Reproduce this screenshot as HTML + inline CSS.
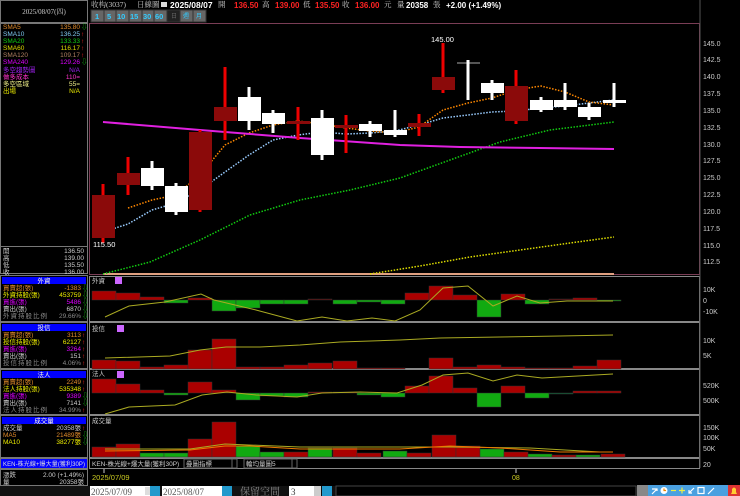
<!DOCTYPE html><html><head><meta charset="utf-8"><style>
html,body{margin:0;padding:0;background:#000;width:740px;height:496px;overflow:hidden}
svg{display:block}
text{font-family:"Liberation Sans","Noto Sans CJK TC",sans-serif}
.s{font-family:"Liberation Serif","Noto Serif CJK SC",serif}
</style></head><body>
<svg width="740" height="496" viewBox="0 0 740 496" xmlns="http://www.w3.org/2000/svg">
<rect width="740" height="496" fill="#000"/>
<g fill="none" stroke="#777" stroke-width="1">
<rect x="0.5" y="0.5" width="87" height="22"/>
<rect x="0.5" y="23.5" width="87" height="250"/>
<rect x="0.5" y="275.5" width="87" height="46"/>
<rect x="0.5" y="322.5" width="87" height="46"/>
<rect x="0.5" y="369.5" width="87" height="45"/>
<rect x="0.5" y="415.5" width="87" height="42"/>
<rect x="0.5" y="458.5" width="87" height="10"/>
<rect x="0.5" y="469.5" width="87" height="16"/>
</g>
<text x="44" y="14" font-size="7" fill="#ccc" text-anchor="middle" class="s">2025/08/07(四)</text>
<g font-size="6.5" class="s">
<text x="3" y="29" fill="#e08a2a">SMA5</text><text x="80" y="29" fill="#e08a2a" text-anchor="end">135.80</text><text x="81" y="29" fill="#1c1">⇩</text>
<text x="3" y="36" fill="#7fc8f0">SMA10</text><text x="80" y="36" fill="#7fc8f0" text-anchor="end">136.25</text><text x="81" y="36" fill="#f22">↑</text>
<text x="3" y="43" fill="#1c1">SMA20</text><text x="80" y="43" fill="#1c1" text-anchor="end">133.33</text><text x="81" y="43" fill="#f22">↑</text>
<text x="3" y="50" fill="#dd0">SMA60</text><text x="80" y="50" fill="#dd0" text-anchor="end">116.17</text><text x="81" y="50" fill="#f22">↑</text>
<text x="3" y="57" fill="#b08060">SMA120</text><text x="80" y="57" fill="#b08060" text-anchor="end">109.17</text><text x="81" y="57" fill="#f22">↑</text>
<text x="3" y="64" fill="#d0f">SMA240</text><text x="80" y="64" fill="#d0f" text-anchor="end">129.26</text><text x="81" y="64" fill="#1c1">⇩</text>
<text x="3" y="72" fill="#a020f0">多空趨勢圖</text><text x="80" y="72" fill="#a020f0" text-anchor="end">N/A</text>
<text x="3" y="79" fill="#f3c">做多成本</text><text x="80" y="79" fill="#f3c" text-anchor="end">110=</text>
<text x="3" y="86" fill="#ee8">多空區域</text><text x="80" y="86" fill="#ee8" text-anchor="end">55=</text>
<text x="3" y="93" fill="#ee0">出場</text><text x="80" y="93" fill="#ee0" text-anchor="end">N/A</text>
</g>
<line x1="0" y1="246.5" x2="88" y2="246.5" stroke="#777"/>
<g font-size="6.5" fill="#ccc" class="s">
<text x="3" y="253">開</text><text x="84" y="253" text-anchor="end">136.50</text>
<text x="3" y="260">高</text><text x="84" y="260" text-anchor="end">139.00</text>
<text x="3" y="267">低</text><text x="84" y="267" text-anchor="end">135.50</text>
<text x="3" y="274">收</text><text x="84" y="274" text-anchor="end">136.00</text>
</g>
<g font-size="6.5" class="s">
<rect x="2" y="277" width="84" height="7" fill="#0000ff"/><text x="44" y="283" fill="#ffd" text-anchor="middle">外資</text>
<text x="3" y="290" fill="#e08a2a">買賣超(張)</text><text x="81" y="290" fill="#e08a2a" text-anchor="end">-1383</text><text x="82" y="290" fill="#1c1">⇩</text>
<text x="3" y="297" fill="#ee0">外資持股(張)</text><text x="81" y="297" fill="#ee0" text-anchor="end">453759</text><text x="82" y="297" fill="#1c1">⇩</text>
<text x="3" y="304" fill="#d0f">買進(張)</text><text x="81" y="304" fill="#d0f" text-anchor="end">5486</text><text x="82" y="304" fill="#1c1">⇩</text>
<text x="3" y="311" fill="#ccc">賣出(張)</text><text x="81" y="311" fill="#ccc" text-anchor="end">6870</text><text x="82" y="311" fill="#1c1">⇩</text>
<text x="3" y="318" fill="#888" textLength="44">外資持股比例</text><text x="81" y="318" fill="#888" text-anchor="end">29.66%</text><text x="82" y="318" fill="#1c1">⇩</text>

<rect x="2" y="324" width="84" height="7" fill="#0000ff"/><text x="44" y="330" fill="#ffd" text-anchor="middle">投信</text>
<text x="3" y="337" fill="#e08a2a">買賣超(張)</text><text x="81" y="337" fill="#e08a2a" text-anchor="end">3113</text><text x="82" y="337" fill="#f22">↑</text>
<text x="3" y="344" fill="#ee0">投信持股(張)</text><text x="81" y="344" fill="#ee0" text-anchor="end">62127</text><text x="82" y="344" fill="#f22">↑</text>
<text x="3" y="351" fill="#d0f">買進(張)</text><text x="81" y="351" fill="#d0f" text-anchor="end">3264</text><text x="82" y="351" fill="#f22">↑</text>
<text x="3" y="358" fill="#ccc">賣出(張)</text><text x="81" y="358" fill="#ccc" text-anchor="end">151</text><text x="82" y="358" fill="#f22">↑</text>
<text x="3" y="365" fill="#888" textLength="44">投信持股比例</text><text x="81" y="365" fill="#888" text-anchor="end">4.06%</text><text x="82" y="365" fill="#f22">↑</text>

<rect x="2" y="371" width="84" height="7" fill="#0000ff"/><text x="44" y="377" fill="#ffd" text-anchor="middle">法人</text>
<text x="3" y="384" fill="#e08a2a">買賣超(張)</text><text x="81" y="384" fill="#e08a2a" text-anchor="end">2249</text><text x="82" y="384" fill="#f22">↑</text>
<text x="3" y="391" fill="#ee0">法人持股(張)</text><text x="81" y="391" fill="#ee0" text-anchor="end">535348</text><text x="82" y="391" fill="#f22">↑</text>
<text x="3" y="398" fill="#d0f">買進(張)</text><text x="81" y="398" fill="#d0f" text-anchor="end">9389</text><text x="82" y="398" fill="#1c1">⇩</text>
<text x="3" y="405" fill="#ccc">賣出(張)</text><text x="81" y="405" fill="#ccc" text-anchor="end">7141</text><text x="82" y="405" fill="#1c1">⇩</text>
<text x="3" y="412" fill="#888" textLength="44">法人持股比例</text><text x="81" y="412" fill="#888" text-anchor="end">34.99%</text><text x="82" y="412" fill="#f22">↑</text>

<rect x="2" y="417" width="84" height="7" fill="#0000ff"/><text x="44" y="423" fill="#ffd" text-anchor="middle">成交量</text>
<text x="3" y="430" fill="#ccc">成交量</text><text x="81" y="430" fill="#ccc" text-anchor="end">20358張</text><text x="82" y="430" fill="#f22">↑</text>
<text x="3" y="437" fill="#e08a2a">MA5</text><text x="81" y="437" fill="#e08a2a" text-anchor="end">21489張</text><text x="82" y="437" fill="#1c1">⇩</text>
<text x="3" y="444" fill="#ee0">MA10</text><text x="81" y="444" fill="#ee0" text-anchor="end">38277張</text><text x="82" y="444" fill="#1c1">⇩</text>

<rect x="1" y="459" width="86" height="9" fill="#0000ff"/><text x="3" y="466" fill="#ddd" font-size="6" textLength="82">KEN-株光線+爆大量(獲利30P)</text>
<text x="3" y="477" fill="#ccc">漲跌</text><text x="84" y="477" fill="#ccc" text-anchor="end">2.00 (+1.49%)</text>
<text x="3" y="484" fill="#ccc">量</text><text x="84" y="484" fill="#ccc" text-anchor="end">20358張</text>
</g>
<g font-size="7.5">
<text x="91" y="7" fill="#ccc" class="s">收构(3037)</text>
<text x="137" y="7" fill="#ccc" class="s">日線圖</text>
<rect x="161" y="2" width="6" height="5" fill="#ddd"/>
<text x="170" y="8" fill="#fff" font-weight="bold" font-size="8.5">2025/08/07</text>
<text x="218" y="7" fill="#ccc" class="s">開</text><text x="234" y="8" fill="#f22" font-weight="bold" font-size="8">136.50</text>
<text x="262" y="7" fill="#ccc" class="s">高</text><text x="275" y="8" fill="#f22" font-weight="bold" font-size="8">139.00</text>
<text x="303" y="7" fill="#ccc" class="s">低</text><text x="315" y="8" fill="#f22" font-weight="bold" font-size="8">135.50</text>
<text x="342" y="7" fill="#ccc" class="s">收</text><text x="355" y="8" fill="#f22" font-weight="bold" font-size="8">136.00</text>
<text x="384" y="7" fill="#ccc" class="s">元</text>
<text x="397" y="7" fill="#ccc" class="s">量</text>
<text x="406" y="8" fill="#fff" font-weight="bold" font-size="8">20358</text>
<text x="433" y="7" fill="#ccc" class="s">張</text>
<text x="446" y="8" fill="#fff" font-weight="bold" font-size="8">+2.00 (+1.49%)</text>
</g>
<g font-size="7.5" font-weight="bold" fill="#3cf">
<rect x="91" y="10" width="115" height="12" fill="#555"/>
<rect x="91" y="10" width="13" height="12" fill="#666" stroke="#333"/><text x="95" y="19">1</text>
<rect x="104" y="10" width="12" height="12" fill="#666" stroke="#333"/><text x="107" y="19">5</text>
<rect x="116" y="10" width="13" height="12" fill="#666" stroke="#333"/><text x="117" y="19">10</text>
<rect x="129" y="10" width="13" height="12" fill="#666" stroke="#333"/><text x="130" y="19">15</text>
<rect x="142" y="10" width="12" height="12" fill="#666" stroke="#333"/><text x="143" y="19">30</text>
<rect x="154" y="10" width="13" height="12" fill="#666" stroke="#333"/><text x="155" y="19">60</text>
<rect x="167" y="10" width="13" height="12" fill="#222" stroke="#333"/><text x="171" y="18" fill="#666" font-size="6" font-weight="normal">日</text>
<rect x="180" y="10" width="13" height="12" fill="#666" stroke="#333"/><text x="183" y="18" font-size="6" font-weight="normal">週</text>
<rect x="193" y="10" width="13" height="12" fill="#666" stroke="#333"/><text x="196" y="18" font-size="6" font-weight="normal">月</text>
</g>
<g fill="none" stroke="#888">
<rect x="89.5" y="23.5" width="610" height="251" stroke="#7a3d55"/>
<rect x="89.5" y="276.5" width="610" height="45"/>
<rect x="89.5" y="322.5" width="610" height="46"/>
<rect x="89.5" y="369.5" width="610" height="45"/>
<rect x="89.5" y="415.5" width="610" height="42"/>
<rect x="89.5" y="458.5" width="610" height="10"/>
</g>
<line x1="700" y1="0" x2="700" y2="468" stroke="#555"/>
<g font-size="7" fill="#ccc">
<text x="703" y="46">145.0</text><text x="703" y="62">142.5</text><text x="703" y="79">140.0</text><text x="703" y="96">137.5</text><text x="703" y="113">135.0</text><text x="703" y="130">132.5</text><text x="703" y="147">130.0</text><text x="703" y="163">127.5</text><text x="703" y="180">125.0</text><text x="703" y="197">122.5</text><text x="703" y="214">120.0</text><text x="703" y="231">117.5</text><text x="703" y="248">115.0</text><text x="703" y="264">112.5</text>
<text x="703" y="292">10K</text><text x="703" y="303">0</text><text x="703" y="314">-10K</text>
<text x="703" y="343">10K</text><text x="703" y="358">5K</text>
<text x="703" y="388">520K</text><text x="703" y="403">500K</text>
<text x="703" y="430">150K</text><text x="703" y="440">100K</text><text x="703" y="451">50K</text><text x="703" y="467">20</text>
</g>
<line x1="103" y1="274" x2="614" y2="274" stroke="#e0a080" stroke-width="2"/>
<polyline fill="none" stroke="#dd0" stroke-width="1.5" stroke-dasharray="1.5,1.5" points="370,274 420,266 470,257 520,250 570,243 614,237"/>
<polyline fill="none" stroke="#1c1" stroke-width="1.5" stroke-dasharray="1.5,1.5" points="103,274 150,262 200,240 250,215 300,200 350,190 400,178 450,160 500,142 550,130 590,125 614,122"/>
<polyline fill="none" stroke="#9cf" stroke-width="1.5" stroke-dasharray="1.5,1.5" points="103,232 128,224 152,210 176,203 200,190 225,172 249,155 273,140 298,135 322,132 346,134 370,133 395,131 419,125 443,118 468,115 492,112 516,111 541,108 565,106 589,103 614,100"/>
<polyline fill="none" stroke="#f80" stroke-width="1.5" stroke-dasharray="1.5,1.5" points="128,208 152,200 176,195 200,175 225,145 249,133 273,125 298,121 322,124 346,128 370,131 395,133 419,127 443,110 468,103 492,98 516,90 541,86 565,92 589,102 614,105"/>
<polyline fill="none" stroke="#e020e0" stroke-width="2" points="103,122 200,130 300,138 400,145 460,147 540,148 614,149"/>
<g stroke-width="3">
<line x1="103" y1="184" x2="103" y2="243" stroke="#e00"/><rect x="92" y="195" width="23" height="43" fill="#8b0a0a"/>
<line x1="128" y1="157" x2="128" y2="195" stroke="#e00"/><rect x="117" y="173" width="23" height="12" fill="#8b0a0a"/>
<line x1="152" y1="161" x2="152" y2="190" stroke="#fff"/><rect x="141" y="168" width="23" height="18" fill="#fff"/>
<line x1="176" y1="183" x2="176" y2="215" stroke="#fff"/><rect x="165" y="186" width="23" height="26" fill="#fff"/>
<line x1="200" y1="130" x2="200" y2="212" stroke="#e00"/><rect x="189" y="132" width="23" height="78" fill="#8b0a0a"/>
<line x1="225" y1="67" x2="225" y2="140" stroke="#e00"/><rect x="214" y="107" width="23" height="14" fill="#8b0a0a"/>
<line x1="249" y1="87" x2="249" y2="130" stroke="#fff"/><rect x="238" y="97" width="23" height="24" fill="#fff"/>
<line x1="273" y1="110" x2="273" y2="133" stroke="#fff"/><rect x="262" y="113" width="23" height="11" fill="#fff"/>
<line x1="298" y1="107" x2="298" y2="140" stroke="#e00"/><rect x="287" y="121" width="23" height="3" fill="#8b0a0a"/>
<line x1="322" y1="110" x2="322" y2="160" stroke="#fff"/><rect x="311" y="118" width="23" height="37" fill="#fff"/>
<line x1="346" y1="115" x2="346" y2="153" stroke="#e00"/><rect x="335" y="125" width="23" height="3" fill="#8b0a0a"/>
<line x1="370" y1="121" x2="370" y2="137" stroke="#fff"/><rect x="359" y="124" width="23" height="7" fill="#fff"/>
<line x1="395" y1="110" x2="395" y2="137" stroke="#fff"/><rect x="384" y="130" width="23" height="5" fill="#fff"/>
<line x1="419" y1="114" x2="419" y2="136" stroke="#e00"/><rect x="408" y="123" width="23" height="4" fill="#8b0a0a"/>
<line x1="443" y1="43" x2="443" y2="93" stroke="#e00"/><rect x="432" y="77" width="23" height="13" fill="#8b0a0a"/>
<line x1="457" y1="63" x2="480" y2="63" stroke="#aaa" stroke-width="1"/><line x1="468" y1="60" x2="468" y2="100" stroke="#fff"/>
<line x1="492" y1="80" x2="492" y2="100" stroke="#fff"/><rect x="481" y="83" width="23" height="10" fill="#fff"/>
<line x1="516" y1="70" x2="516" y2="124" stroke="#e00"/><rect x="505" y="86" width="23" height="35" fill="#8b0a0a"/>
<line x1="541" y1="97" x2="541" y2="112" stroke="#fff"/><rect x="530" y="100" width="23" height="10" fill="#fff"/>
<line x1="565" y1="83" x2="565" y2="110" stroke="#fff"/><rect x="554" y="100" width="23" height="7" fill="#fff"/>
<line x1="589" y1="103" x2="589" y2="120" stroke="#fff"/><rect x="578" y="107" width="23" height="10" fill="#fff"/>
<line x1="614" y1="83" x2="614" y2="107" stroke="#fff"/><rect x="603" y="100" width="23" height="3" fill="#fff"/>
</g>
<text x="431" y="42" font-size="7.5" fill="#fff">145.00</text>
<text x="93" y="247" font-size="7.5" fill="#fff">115.50</text>
<g font-size="6.5" fill="#ccc" class="s">
<text x="92" y="283">外資</text><rect x="115" y="277" width="7" height="7" fill="#c6f"/>
<text x="92" y="331">投信</text><rect x="117" y="325" width="7" height="7" fill="#c6f"/>
<text x="92" y="376">法人</text><rect x="117" y="371" width="7" height="7" fill="#c6f"/>
<text x="92" y="423">成交量</text>
</g>
<g stroke="#333" stroke-width="0.5">
<rect x="92" y="291" width="24" height="9" fill="#a00"/>
<rect x="116" y="293" width="24" height="7" fill="#a00"/>
<rect x="140" y="297" width="24" height="3" fill="#a00"/>
<rect x="164" y="300" width="24" height="3" fill="#1a1"/>
<rect x="188" y="298" width="24" height="2" fill="#a00"/>
<rect x="212" y="300" width="24" height="11" fill="#1a1"/>
<rect x="236" y="300" width="24" height="8" fill="#1a1"/>
<rect x="260" y="300" width="24" height="4" fill="#1a1"/>
<rect x="284" y="300" width="24" height="4" fill="#1a1"/>
<rect x="308" y="299" width="24" height="1" fill="#600"/>
<rect x="333" y="300" width="24" height="4" fill="#1a1"/>
<rect x="357" y="300" width="24" height="2" fill="#1a1"/>
<rect x="381" y="300" width="24" height="4" fill="#1a1"/>
<rect x="405" y="293" width="24" height="7" fill="#a00"/>
<rect x="429" y="286" width="24" height="14" fill="#a00"/>
<rect x="453" y="295" width="24" height="5" fill="#a00"/>
<rect x="477" y="300" width="24" height="17" fill="#1a1"/>
<rect x="501" y="294" width="24" height="6" fill="#a00"/>
<rect x="525" y="300" width="24" height="4" fill="#1a1"/>
<rect x="549" y="299" width="24" height="1" fill="#600"/>
<rect x="573" y="298" width="24" height="2" fill="#a00"/>
<rect x="597" y="300" width="24" height="1" fill="#1a1"/>
</g>
<polyline fill="none" stroke="#aa2" points="105,317 129,306 165,302 201,294 214,300 256,310 297,321 322,317 347,321 372,318 395,321 420,310 443,288 468,286 493,306 517,296 540,303 567,301 613,301"/>
<g stroke="#333" stroke-width="0.5">
<rect x="92" y="360" width="24" height="9" fill="#a00"/>
<rect x="116" y="361" width="24" height="8" fill="#a00"/>
<rect x="140" y="367" width="24" height="2" fill="#a00"/>
<rect x="164" y="365" width="24" height="4" fill="#a00"/>
<rect x="188" y="350" width="24" height="19" fill="#a00"/>
<rect x="212" y="339" width="24" height="30" fill="#a00"/>
<rect x="236" y="367" width="24" height="2" fill="#a00"/>
<rect x="260" y="367" width="24" height="2" fill="#a00"/>
<rect x="284" y="365" width="24" height="4" fill="#a00"/>
<rect x="308" y="363" width="24" height="6" fill="#a00"/>
<rect x="333" y="361" width="24" height="8" fill="#a00"/>
<rect x="357" y="368" width="24" height="1" fill="#a00"/>
<rect x="381" y="368" width="24" height="1" fill="#a00"/>
<rect x="429" y="358" width="24" height="11" fill="#a00"/>
<rect x="453" y="367" width="24" height="2" fill="#a00"/>
<rect x="477" y="365" width="24" height="4" fill="#a00"/>
<rect x="501" y="367" width="24" height="2" fill="#a00"/>
<rect x="525" y="368" width="24" height="1" fill="#a00"/>
<rect x="549" y="368" width="24" height="1" fill="#a00"/>
<rect x="573" y="366" width="24" height="3" fill="#a00"/>
<rect x="597" y="360" width="24" height="9" fill="#a00"/>
</g>
<polyline fill="none" stroke="#aa2" points="105,358 170,356 200,350 226,347 260,347 300,345 340,342 400,340 440,338 500,337 560,336 613,335"/>
<g stroke="#333" stroke-width="0.5">
<rect x="92" y="379" width="24" height="14" fill="#a00"/>
<rect x="116" y="384" width="24" height="9" fill="#a00"/>
<rect x="140" y="390" width="24" height="3" fill="#a00"/>
<rect x="164" y="393" width="24" height="2" fill="#1a1"/>
<rect x="188" y="382" width="24" height="11" fill="#a00"/>
<rect x="212" y="390" width="24" height="3" fill="#a00"/>
<rect x="236" y="393" width="24" height="7" fill="#1a1"/>
<rect x="260" y="393" width="24" height="3" fill="#1a1"/>
<rect x="284" y="393" width="24" height="4" fill="#1a1"/>
<rect x="308" y="392" width="24" height="1" fill="#a00"/>
<rect x="333" y="392" width="24" height="1" fill="#a00"/>
<rect x="357" y="393" width="24" height="2" fill="#1a1"/>
<rect x="381" y="393" width="24" height="4" fill="#1a1"/>
<rect x="405" y="386" width="24" height="7" fill="#a00"/>
<rect x="429" y="376" width="24" height="17" fill="#a00"/>
<rect x="453" y="388" width="24" height="5" fill="#a00"/>
<rect x="477" y="393" width="24" height="14" fill="#1a1"/>
<rect x="501" y="386" width="24" height="7" fill="#a00"/>
<rect x="525" y="393" width="24" height="5" fill="#1a1"/>
<rect x="549" y="393" width="24" height="1" fill="#063"/>
<rect x="573" y="391" width="24" height="2" fill="#a00"/>
<rect x="597" y="391" width="24" height="2" fill="#a00"/>
</g>
<polyline fill="none" stroke="#aa2" points="105,414 129,407 175,405 202,395 227,392 256,395 297,397 322,393 360,392 397,393 422,385 443,375 468,373 493,381 517,375 542,378 613,374"/>
<g stroke="#333" stroke-width="0.5">
<rect x="92" y="447" width="24" height="10" fill="#a00"/>
<rect x="116" y="444" width="24" height="13" fill="#a00"/>
<rect x="140" y="453" width="24" height="4" fill="#1a1"/>
<rect x="164" y="453" width="24" height="4" fill="#1a1"/>
<rect x="188" y="439" width="24" height="18" fill="#a00"/>
<rect x="212" y="422" width="24" height="35" fill="#a00"/>
<rect x="236" y="446" width="24" height="11" fill="#1a1"/>
<rect x="260" y="452" width="24" height="5" fill="#1a1"/>
<rect x="284" y="452" width="24" height="5" fill="#a00"/>
<rect x="308" y="448" width="24" height="9" fill="#1a1"/>
<rect x="333" y="448" width="24" height="9" fill="#a00"/>
<rect x="357" y="453" width="24" height="4" fill="#a00"/>
<rect x="383" y="451" width="24" height="6" fill="#1a1"/>
<rect x="407" y="453" width="24" height="4" fill="#a00"/>
<rect x="432" y="435" width="24" height="22" fill="#a00"/>
<rect x="456" y="446" width="24" height="11" fill="#a00"/>
<rect x="480" y="449" width="24" height="8" fill="#1a1"/>
<rect x="504" y="452" width="24" height="5" fill="#a00"/>
<rect x="528" y="454" width="24" height="3" fill="#1a1"/>
<rect x="552" y="455" width="24" height="2" fill="#a00"/>
<rect x="576" y="455" width="24" height="2" fill="#1a1"/>
<rect x="601" y="454" width="24" height="3" fill="#a00"/>
</g>
<polyline fill="none" stroke="#aa2" points="105,449 190,449 225,444 300,447 400,447 450,447 530,448 600,452 613,452"/>
<polyline fill="none" stroke="#e70" points="105,451 190,450 225,446 250,446 300,449 400,449 450,446 500,448 560,452 613,452"/>
<g font-size="6.5" class="s" fill="#ccc">
<text x="92" y="466">KEN-株光線+爆大量(獲利30P)</text>
<rect x="184" y="459" width="48" height="9" fill="#000" stroke="#666"/><text x="186" y="466">疊圖指標</text>
<rect x="232" y="459" width="5" height="9" fill="#000" stroke="#666"/>
<rect x="244" y="459" width="48" height="9" fill="#000" stroke="#666"/><text x="246" y="466">輪均量圖5</text>
<rect x="292" y="459" width="5" height="9" fill="#000" stroke="#666"/>
</g>
<line x1="104" y1="469" x2="104" y2="473" stroke="#ccc"/>
<line x1="516" y1="469" x2="516" y2="473" stroke="#ccc"/>
<text x="92" y="480" font-size="7.5" fill="#cc2">2025/07/09</text>
<text x="512" y="480" font-size="7" fill="#cc2">08</text>
<rect x="0" y="486" width="740" height="10" fill="#111"/>
<rect x="90" y="486" width="60" height="10" fill="#fff"/>
<text x="91" y="495" font-size="9" fill="#555" class="s">2025/07/09</text>
<rect x="145" y="487" width="5" height="8" fill="#ddd"/>
<rect x="150" y="486" width="10" height="10" fill="#29c"/>
<text x="164" y="495" font-size="8" fill="#999">~</text>
<rect x="162" y="486" width="60" height="10" fill="#fff"/>
<text x="163" y="495" font-size="9" fill="#555" class="s">2025/08/07</text>
<rect x="222" y="486" width="10" height="10" fill="#29c"/>
<text x="240" y="495" font-size="10" fill="#888" class="s">保留空間</text>
<rect x="289" y="486" width="25" height="10" fill="#fff"/>
<text x="291" y="495" font-size="9" fill="#333" class="s">3</text>
<rect x="314" y="486" width="7" height="10" fill="#ccc"/>
<rect x="322" y="486" width="10" height="10" fill="#29c"/>
<rect x="336" y="486" width="300" height="10" fill="#000" stroke="#444"/>
<rect x="637" y="485" width="11" height="11" fill="#888"/>
<rect x="648" y="485" width="80" height="11" fill="#4aa0e0"/>
<g stroke="#fff" stroke-width="1.2" fill="none">
<path d="M652 494 L657 489 M652 489 L657 489 L657 491"/>
<circle cx="664" cy="490.5" r="3.5" fill="#fff" stroke="none"/>
<path d="M664 488.5 V490.5 H666" stroke="#e80"/>
<path d="M671 490.5 H676" stroke="#ee4"/>
<path d="M679 490.5 H685 M682 487.5 V493.5" stroke="#ee4"/>
<path d="M689 493 L694 488 M689 490 V493 H692"/>
<rect x="698" y="487.5" width="6" height="6"/>
<path d="M708 494 L714 488"/>
</g>
<rect x="728" y="485" width="12" height="11" fill="#d33"/>
<path d="M731 494 H737 L736 492 V489 Q734 486 732 489 V492 Z" fill="#fc3"/>
</svg>
</body></html>
